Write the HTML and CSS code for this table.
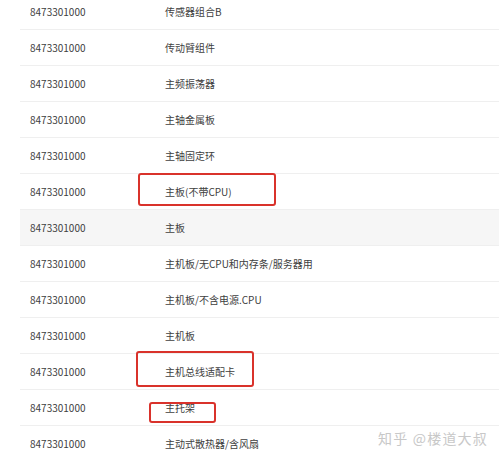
FILE: index.html
```html
<!DOCTYPE html>
<html lang="zh-CN">
<head>
    <meta charset="UTF-8">
    <meta name="viewport" content="width=device-width, initial-scale=1.0">
    <title>商品编码</title>
    <link rel="stylesheet" href="styles.css">
</head>
<body>
    <div class="code-table">
        <div class="row"><span class="code">8473301000</span><span class="name">传感器组合B</span></div>
        <div class="row"><span class="code">8473301000</span><span class="name">传动臂组件</span></div>
        <div class="row"><span class="code">8473301000</span><span class="name">主频振荡器</span></div>
        <div class="row"><span class="code">8473301000</span><span class="name">主轴金属板</span></div>
        <div class="row"><span class="code">8473301000</span><span class="name">主轴固定环</span></div>
        <div class="row"><span class="code">8473301000</span><span class="name">主板(不带CPU)</span><span class="mark mark-1"></span></div>
        <div class="row row-hover"><span class="code">8473301000</span><span class="name">主板</span></div>
        <div class="row"><span class="code">8473301000</span><span class="name">主机板/无CPU和内存条/服务器用</span></div>
        <div class="row"><span class="code">8473301000</span><span class="name">主机板/不含电源.CPU</span></div>
        <div class="row"><span class="code">8473301000</span><span class="name">主机板</span></div>
        <div class="row"><span class="code">8473301000</span><span class="name">主机总线适配卡</span><span class="mark mark-2"></span></div>
        <div class="row"><span class="code">8473301000</span><span class="name">主托架</span><span class="mark mark-3"></span></div>
        <div class="row"><span class="code">8473301000</span><span class="name">主动式散热器/含风扇</span></div>
    </div>

    <div class="watermark">知乎 @楼道大叔</div>
</body>
</html>
```

FILE: styles.css
```css
body {
    margin: 0;
    padding: 0;
    background-color: #fff;
    color: #404040;
    font-family: "Noto Sans CJK SC", "Noto Sans", sans-serif;
    font-size: 10px;
    overflow: hidden;
    height: 457px;
    position: relative;
}
.code-table {
    margin: -6px 0 0 20px;
}
.row {
    position: relative;
    display: grid;
    grid-template-columns: 135px 1fr;
    align-items: center;
    height: 35px;
    padding-left: 10px;
    border-bottom: 1px solid #efefef;
}
.row-hover {
    background-color: #f6f6f6;
}
.code, .name {
    white-space: nowrap;
}
.mark {
    position: absolute;
    border: 2px solid #d9322b;
    border-radius: 3px;
    box-sizing: border-box;
}
.mark-1 {
    left: 118px;
    top: -1px;
    width: 138px;
    height: 33px;
}
.mark-2 {
    left: 116px;
    top: -3px;
    width: 118px;
    height: 36px;
}
.mark-3 {
    left: 129px;
    top: 12px;
    width: 67px;
    height: 21px;
}
.watermark {
    position: absolute;
    left: 378px;
    top: 428px;
    font-size: 14px;
    letter-spacing: 1.2px;
    color: #c8c8c8;
}
```
